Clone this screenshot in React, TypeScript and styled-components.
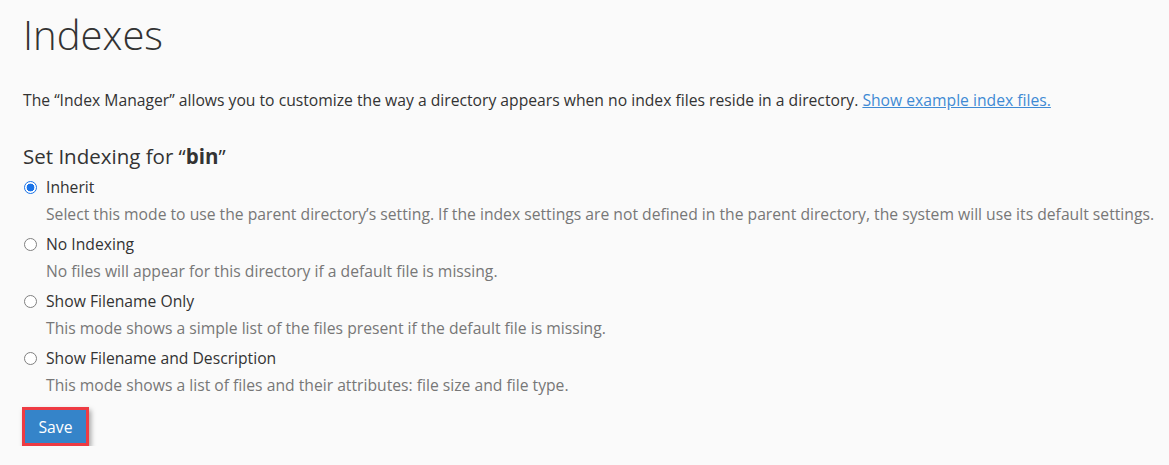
import React, { useState } from 'react';
import styled, { createGlobalStyle } from 'styled-components';

const GlobalStyle = createGlobalStyle`
  html, body {
    margin: 0;
    padding: 0;
    background: #fafafa;
    font-family: "Open Sans", "Liberation Sans", sans-serif;
    color: #333333;
  }
`

const Page = styled.div`
  padding: 6px 6px 0 23px;
`

const Title = styled.h1`
  margin: 0;
  font-size: 40px;
  font-weight: 300;
  line-height: 58px;
  color: #333;
`

const Intro = styled.p`
  margin: 25px 0 0 0;
  font-size: 15.7px;
  line-height: 22px;
`

const Link = styled.a`
  color: #3f8ad4;
  text-decoration: underline;
  cursor: pointer;
`

const SectionTitle = styled.h2`
  margin: 31px 0 0 0;
  font-size: 20.5px;
  font-weight: 400;
  line-height: 28px;
  b {
    font-weight: 700;
  }
`

const OptionList = styled.div`
  margin-top: 6px;
  display: flex;
  flex-direction: column;
  gap: 8px;
`

const OptionItem = styled.div`
  display: flex;
  flex-direction: column;
`

const OptionLabel = styled.label`
  display: flex;
  align-items: center;
  gap: 9px;
  font-size: 15.7px;
  line-height: 22px;
  cursor: pointer;
`

const RadioInput = styled.input`
  appearance: none;
  margin: 0 0 0 1px;
  width: 13px;
  height: 13px;
  border-radius: 50%;
  border: 1px solid #808080;
  background: #fff;
  box-sizing: border-box;
  &:checked {
    border: 1px solid #1a73e8;
    background: radial-gradient(circle, #1a73e8 0 3.6px, #fff 4.2px);
  }
`

const OptionDesc = styled.div`
  margin: 5px 0 0 23px;
  font-size: 15.7px;
  line-height: 22px;
  color: #777777;
`

const SaveFrame = styled.div`
  margin-top: 11px;
  margin-left: -1px;
  display: inline-block;
  border: 3px solid #ee3b43;
  box-shadow: 2px 3px 5px rgba(0, 0, 0, 0.35);
`

const SaveButton = styled.button`
  display: block;
  width: 61px;
  height: 33px;
  border: 0;
  padding: 0;
  background: #3584c9;
  color: #fff;
  font-family: "Open Sans", "Liberation Sans", sans-serif;
  font-size: 15.7px;
  font-weight: 400;
  cursor: pointer;
`

const options = [
  { key: 'inherit', label: 'Inherit', desc: 'Select this mode to use the parent directory\u2019s setting. If the index settings are not defined in the parent directory, the system will use its default settings.' },
  { key: 'none', label: 'No Indexing', desc: 'No files will appear for this directory if a default file is missing.' },
  { key: 'filename', label: 'Show Filename Only', desc: 'This mode shows a simple list of the files present if the default file is missing.' },
  { key: 'description', label: 'Show Filename and Description', desc: 'This mode shows a list of files and their attributes: file size and file type.' },
];

export default function App() {
  const [mode, setMode] = useState('inherit');

  return (
    <>
      <GlobalStyle />
      <Page>
        <Title>Indexes</Title>
        <Intro>
          The &ldquo;Index Manager&rdquo; allows you to customize the way a directory appears when no index files reside in a directory. <Link>Show example index files.</Link>
        </Intro>
        <SectionTitle>Set Indexing for &ldquo;<b>bin</b>&rdquo;</SectionTitle>
        <OptionList>
          {options.map((o) => (
            <OptionItem key={o.key}>
              <OptionLabel>
                <RadioInput
                  type="radio"
                  name="indexing"
                  checked={mode === o.key}
                  onChange={() => setMode(o.key)}
                />
                {o.label}
              </OptionLabel>
              <OptionDesc>{o.desc}</OptionDesc>
            </OptionItem>
          ))}
        </OptionList>
        <SaveFrame>
          <SaveButton>Save</SaveButton>
        </SaveFrame>
      </Page>
    </>
  );
}
